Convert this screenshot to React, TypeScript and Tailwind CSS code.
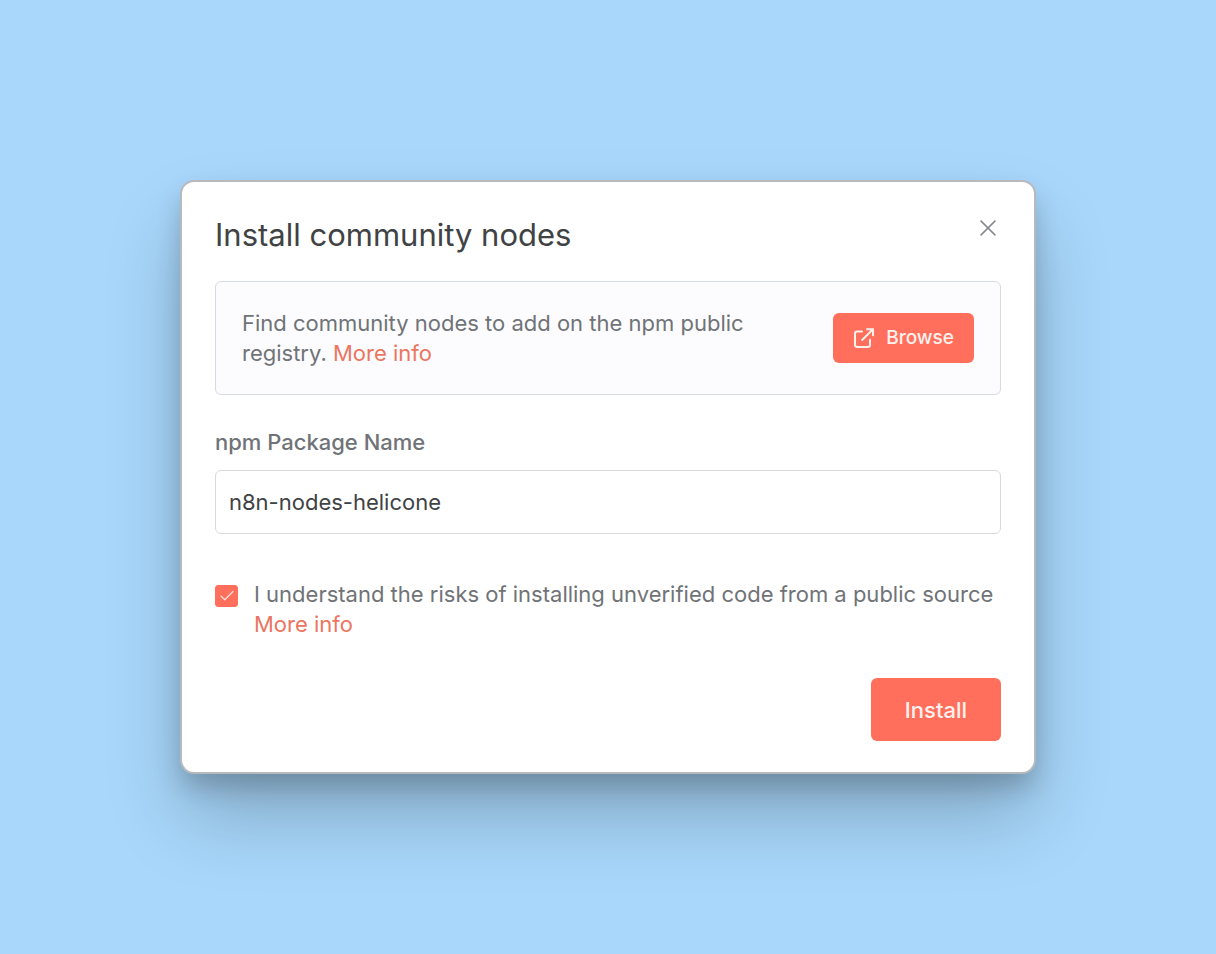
import { useState } from "react"
import { Check } from "lucide-react"

function ExternalLinkIcon() {
  return (
    <svg
      className="h-[22px] w-[22px] shrink-0"
      viewBox="0 0 22 22"
      fill="none"
      stroke="currentColor"
      strokeWidth="2"
      strokeLinecap="round"
      strokeLinejoin="round"
      aria-hidden="true"
    >
      <path d="M9 4.6H4.2a2.2 2.2 0 0 0-2.2 2.2v11a2.2 2.2 0 0 0 2.2 2.2h10.6a2.2 2.2 0 0 0 2.2-2.2v-5" />
      <path d="M14 2.2h6v6" />
      <path d="M19.8 2.4 9.2 13" />
    </svg>
  )
}

function CloseIcon() {
  return (
    <svg className="h-4 w-4" viewBox="0 0 16 16" fill="none" stroke="currentColor" strokeWidth="1.5" aria-hidden="true">
      <path d="M0.6 0.6 15.4 15.4M15.4 0.6 0.6 15.4" />
    </svg>
  )
}

export default function App() {
  const [packageName, setPackageName] = useState("n8n-nodes-helicone")
  const [accepted, setAccepted] = useState(true)

  return (
    <main className="flex min-h-screen items-center justify-center bg-[#a8d7fb] p-6 font-['Inter',sans-serif] text-[22px] leading-[30px] text-[#707377]">
      <section
        role="dialog"
        aria-labelledby="install-title"
        className="w-full max-w-[852px] rounded-xl bg-white px-[33px] pt-[33px] pb-[31px] shadow-[0_0_0_2px_#b7babd,0_14px_26px_rgba(0,0,0,0.2),0_44px_76px_rgba(0,0,0,0.22)]"
      >
        <header className="flex items-start justify-between">
          <h1 id="install-title" className="text-[31px] leading-10 text-[#404244]">
            Install community nodes
          </h1>
          <button type="button" aria-label="Close" className="p-[5px] text-[#85888c]">
            <CloseIcon />
          </button>
        </header>

        {/* Registry notice */}
        <div className="mt-[26px] flex items-center justify-between gap-6 rounded-md border border-[#d6dae3] bg-[#fcfcfe] px-[26px] py-[26px]">
          <p className="max-w-[540px]">
            Find community nodes to add on the npm public registry.{" "}
            <a href="#info" className="text-[#eb7561]">
              More info
            </a>
          </p>
          <button
            type="button"
            className="flex h-[50px] shrink-0 items-center gap-[11px] rounded-md bg-[#ff6f5c] px-5 text-[19px] font-medium text-[#fff1ee]"
          >
            <ExternalLinkIcon />
            Browse
          </button>
        </div>

        <form onSubmit={(e) => e.preventDefault()}>
          <label htmlFor="package-name" className="mt-8 block font-medium">
            npm Package Name
          </label>
          <input
            id="package-name"
            type="text"
            value={packageName}
            onChange={(e) => setPackageName(e.target.value)}
            className="mt-[13px] block h-16 w-full rounded-md border border-[#d6dade] bg-white px-[13px] text-[#404244] outline-none"
          />

          <div className="mt-[45px] flex items-start gap-4 overflow-hidden">
            <span className="mt-1.5 grid h-[22px] w-[23px] shrink-0">
              <input
                id="accept-risks"
                type="checkbox"
                checked={accepted}
                onChange={(e) => setAccepted(e.target.checked)}
                className="col-start-1 row-start-1 h-full w-full appearance-none rounded-[3px] border border-[#ff6f5c] checked:bg-[#ff6f5c]"
              />
              {accepted && (
                <Check
                  className="pointer-events-none col-start-1 row-start-1 h-[18px] w-[18px] place-self-center text-[#ffe4de]"
                  strokeWidth={1.6}
                />
              )}
            </span>
            <div className="whitespace-nowrap">
              <label htmlFor="accept-risks" className="block">
                I understand the risks of installing unverified code from a public source
              </label>
              <a href="#risks" className="text-[#eb7561]">
                More info
              </a>
            </div>
          </div>

          <div className="mt-[39px] flex justify-end">
            <button
              type="submit"
              className="h-[63px] w-[130px] rounded-md bg-[#ff6f5c] font-medium text-[#fff1ee]"
            >
              Install
            </button>
          </div>
        </form>
      </section>
    </main>
  )
}
